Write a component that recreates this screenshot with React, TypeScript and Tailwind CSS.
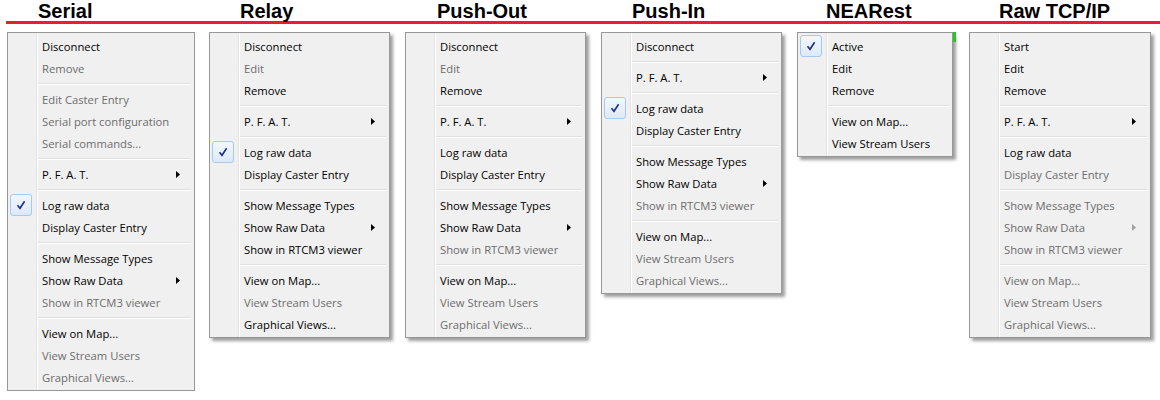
import React from "react";

type Item =
  | { t: "sep" }
  | { t: "item"; label: string; d?: boolean; c?: boolean; sub?: boolean };

const S: Item = { t: "sep" };
const I = (label: string, o: { d?: boolean; c?: boolean; sub?: boolean } = {}): Item => ({
  t: "item",
  label,
  ...o,
});

type Col = {
  title: string;
  colCls: string;
  titleCls: string;
  shadow: boolean;
  green?: boolean;
  items: Item[];
};

const cols: Col[] = [
  {
    title: "Serial",
    colCls: "ml-[7px] w-[188px]",
    titleCls: "pl-[31px]",
    shadow: false,
    items: [
      I("Disconnect"),
      I("Remove", { d: true }),
      S,
      I("Edit Caster Entry", { d: true }),
      I("Serial port configuration", { d: true }),
      I("Serial commands...", { d: true }),
      S,
      I("P. F. A. T.", { sub: true }),
      S,
      I("Log raw data", { c: true }),
      I("Display Caster Entry"),
      S,
      I("Show Message Types"),
      I("Show Raw Data", { sub: true }),
      I("Show in RTCM3 viewer", { d: true }),
      S,
      I("View on Map..."),
      I("View Stream Users", { d: true }),
      I("Graphical Views...", { d: true }),
    ],
  },
  {
    title: "Relay",
    colCls: "ml-[14px] w-[181px]",
    titleCls: "pl-[31px]",
    shadow: true,
    items: [
      I("Disconnect"),
      I("Edit", { d: true }),
      I("Remove"),
      S,
      I("P. F. A. T.", { sub: true }),
      S,
      I("Log raw data", { c: true }),
      I("Display Caster Entry"),
      S,
      I("Show Message Types"),
      I("Show Raw Data", { sub: true }),
      I("Show in RTCM3 viewer"),
      S,
      I("View on Map..."),
      I("View Stream Users", { d: true }),
      I("Graphical Views..."),
    ],
  },
  {
    title: "Push-Out",
    colCls: "ml-[15px] w-[181px]",
    titleCls: "pl-[32px]",
    shadow: true,
    items: [
      I("Disconnect"),
      I("Edit", { d: true }),
      I("Remove"),
      S,
      I("P. F. A. T.", { sub: true }),
      S,
      I("Log raw data"),
      I("Display Caster Entry"),
      S,
      I("Show Message Types"),
      I("Show Raw Data", { sub: true }),
      I("Show in RTCM3 viewer", { d: true }),
      S,
      I("View on Map..."),
      I("View Stream Users", { d: true }),
      I("Graphical Views...", { d: true }),
    ],
  },
  {
    title: "Push-In",
    colCls: "ml-[15px] w-[181px]",
    titleCls: "pl-[31px]",
    shadow: true,
    items: [
      I("Disconnect"),
      S,
      I("P. F. A. T.", { sub: true }),
      S,
      I("Log raw data", { c: true }),
      I("Display Caster Entry"),
      S,
      I("Show Message Types"),
      I("Show Raw Data", { sub: true }),
      I("Show in RTCM3 viewer", { d: true }),
      S,
      I("View on Map..."),
      I("View Stream Users", { d: true }),
      I("Graphical Views...", { d: true }),
    ],
  },
  {
    title: "NEARest",
    colCls: "ml-[15px] w-[156px]",
    titleCls: "pl-[29px]",
    shadow: true,
    green: true,
    items: [
      I("Active", { c: true }),
      I("Edit"),
      I("Remove"),
      S,
      I("View on Map..."),
      I("View Stream Users"),
    ],
  },
  {
    title: "Raw TCP/IP",
    colCls: "ml-[16px] w-[182px]",
    titleCls: "pl-[30px]",
    shadow: true,
    items: [
      I("Start"),
      I("Edit"),
      I("Remove"),
      S,
      I("P. F. A. T.", { sub: true }),
      S,
      I("Log raw data"),
      I("Display Caster Entry", { d: true }),
      S,
      I("Show Message Types", { d: true }),
      I("Show Raw Data", { d: true, sub: true }),
      I("Show in RTCM3 viewer", { d: true }),
      S,
      I("View on Map...", { d: true }),
      I("View Stream Users", { d: true }),
      I("Graphical Views...", { d: true }),
    ],
  },
];

function Check() {
  return (
    <div className="w-[22px] h-[22px] rounded-[3px] border border-[#a9c8ec] bg-[linear-gradient(to_bottom,#f2f7fe,#dde9f9)] flex items-center justify-center">
      <svg width="10" height="10" viewBox="0 0 10 10">
        <path d="M1.5 5.2 L4 8.3 L8.6 1.2" fill="none" stroke="#1e2f8c" strokeWidth="1.6" strokeLinejoin="miter" />
      </svg>
    </div>
  );
}

function Arrow({ d }: { d?: boolean }) {
  return (
    <svg width="4" height="7" viewBox="0 0 4 7" className="mr-[12px] shrink-0">
      <polygon points="0,0 4,3.5 0,7" fill={d ? "#a0a0a0" : "#000000"} />
    </svg>
  );
}

function Menu({ col }: { col: Col }) {
  return (
    <div
      className={`relative w-full border border-[#979797] bg-[#f0f0f0] bg-[linear-gradient(to_right,transparent_28px,#e2e3e3_28px,#e2e3e3_29px,#ffffff_29px,#ffffff_30px,transparent_30px)] p-[2px] ${
        col.shadow ? "shadow-[3px_3px_3px_rgba(0,0,0,0.38)]" : ""
      }`}
    >
      {col.items.map((it, i) =>
        it.t === "sep" ? (
          <div key={i} className="h-[9px] pt-[4px] pl-[28px] pr-[1px]">
            <div className="h-[2px] border-t border-[#e0e0e0] border-b border-b-white" />
          </div>
        ) : (
          <div key={i} className="flex h-[22px] items-center">
            <div className="w-[32px] shrink-0 flex items-center">{it.c ? <Check /> : null}</div>
            <div
              className={`flex-1 whitespace-nowrap pt-[1px] leading-[22px] ${
                it.d ? "text-[#6d6d6d]" : "text-black"
              }`}
            >
              {it.label}
            </div>
            {it.sub ? <Arrow d={it.d} /> : null}
          </div>
        )
      )}
      {col.green ? (
        <div className="absolute top-[-1px] right-[-4px] w-[3px] h-[10px] bg-[#26c426]" />
      ) : null}
    </div>
  );
}

export default function App() {
  return (
    <div className="w-[1160px] h-[400px] bg-white overflow-hidden">
      <div className="flex h-[21px] font-['Liberation_Sans',Arial,sans-serif] font-bold text-[20px] leading-[23px] text-black">
        {cols.map((c) => (
          <div key={c.title} className={`${c.colCls} ${c.titleCls} shrink-0 whitespace-nowrap`}>
            {c.title}
          </div>
        ))}
      </div>
      <div className="ml-[6px] h-[3px] bg-[#e8202a]" />
      <div className="flex items-start mt-[8px] font-['Open_Sans','Noto_Sans',sans-serif] text-[11.25px]">
        {cols.map((c) => (
          <div key={c.title} className={`${c.colCls} shrink-0`}>
            <Menu col={c} />
          </div>
        ))}
      </div>
    </div>
  );
}
